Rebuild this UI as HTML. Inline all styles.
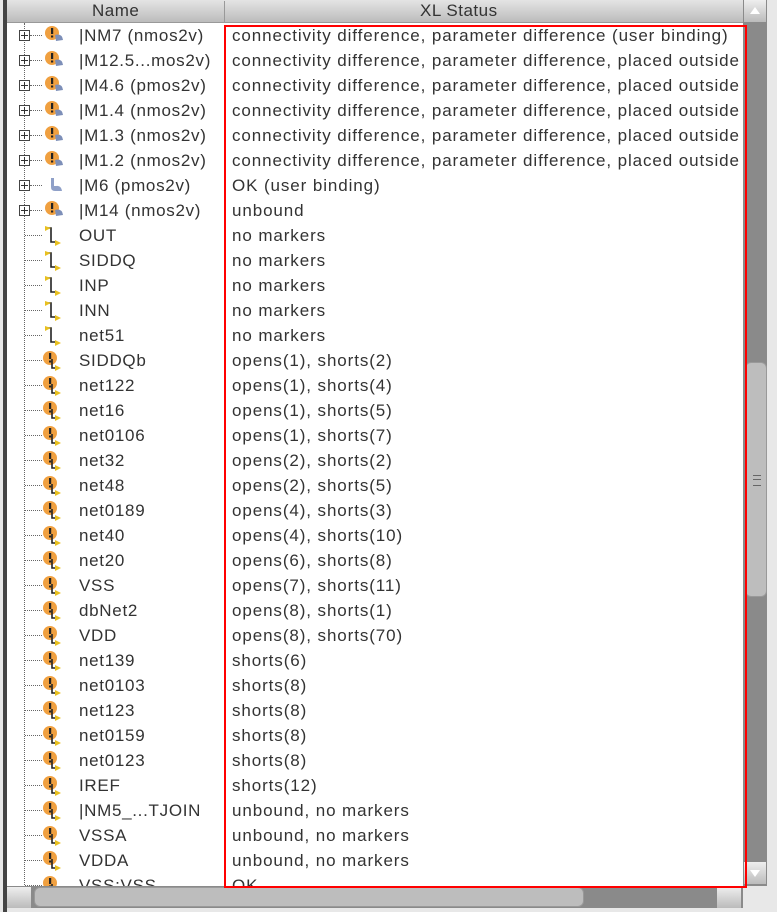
<!DOCTYPE html>
<html><head><style>
body{margin:0;width:777px;height:912px;background:#e8e8e8;font-family:"Liberation Sans",sans-serif;overflow:hidden;position:relative}
.list{position:absolute;left:7px;top:0;width:736px;height:886px;background:#fff}
.lb{position:absolute;left:3px;top:0;width:4px;height:912px;background:#444}
.hdr{position:absolute;top:0;height:22px;background:linear-gradient(#e4e4e4,#bcbcbc);border-bottom:1px solid #999}
.hdr div{position:absolute;top:1px;font-size:17px;color:#333;letter-spacing:0.5px}
.hsep{position:absolute;top:0;width:1px;height:22px;background:#999}
.row{position:absolute;left:0;height:25px;width:743px;font-size:17px;letter-spacing:0.9px;color:#333;line-height:25px}
.n{position:absolute;left:79px;letter-spacing:0.7px}.s{position:absolute;left:232px;white-space:nowrap}
.vl{position:absolute;left:24px;top:23px;width:0;height:870px;border-left:1px dotted #666}
.hc{position:absolute;top:12px;border-top:1px dotted #666}
.pb{position:absolute;left:19px;top:7px;width:9px;height:9px;border:1px solid #444;background:#fff}
.pb:before{content:"";position:absolute;left:1px;top:4px;width:7px;height:1px;background:#333}
.pb:after{content:"";position:absolute;left:4px;top:1px;width:1px;height:7px;background:#333}
.red{position:absolute;left:224px;top:25px;width:519px;height:859px;border:2px solid #f00;z-index:5}
.vs{position:absolute;left:743px;top:0;width:24px;height:886px;background:#8a8a8a}
.hs{position:absolute;left:7px;top:886px;width:736px;height:22px;background:#8a8a8a}
#rows{position:absolute;left:0;top:0;width:743px;height:886px;overflow:hidden}
</style></head><body>
<div class="list"></div>
<div class="lb"></div>
<div class="vl"></div>
<div id="rows"></div>
<div class="hdr" style="left:7px;width:736px"><div style="left:85px">Name</div><div style="left:413px">XL Status</div><div class="hsep" style="left:217px"></div></div>
<svg width="0" height="0" style="position:absolute">
<defs>
<g id="dev"><circle cx="8" cy="8" r="7" fill="#f0a040"/><rect x="7" y="3" width="2.2" height="6" fill="#222"/><rect x="7" y="10.5" width="2.2" height="2" fill="#222"/><path d="M11 10 q7 -2 8 5 l-7 1z" fill="#7d8fb8"/></g>
<g id="ok"><path d="M7 3 v9 q0 4 4 4 h7 q-1 -6 -6 -5 l-2 0 v-8z" fill="#8fa0c8"/></g>
<g id="net"><path d="M6 3 h3 v14 h5" stroke="#222" stroke-width="1.6" fill="none"/><path d="M3 1 l6 2 -6 3z M13 15 l6 3 -6 3z" fill="#e8c020"/></g>
<g id="wn"><circle cx="8" cy="8" r="7" fill="#f0a040"/><rect x="7" y="3" width="2.2" height="6" fill="#222"/><rect x="7" y="10.5" width="2.2" height="2" fill="#222"/><path d="M10 9 v9 h4" stroke="#222" stroke-width="1.6" fill="none"/><path d="M13 15 l6 3 -6 3z" fill="#e8c020"/></g>
</defs></svg>
<script>
var R=[["d","|NM7 (nmos2v)","connectivity difference, parameter difference (user binding)"],
["d","|M12.5...mos2v)","connectivity difference, parameter difference, placed outside"],
["d","|M4.6 (pmos2v)","connectivity difference, parameter difference, placed outside"],
["d","|M1.4 (nmos2v)","connectivity difference, parameter difference, placed outside"],
["d","|M1.3 (nmos2v)","connectivity difference, parameter difference, placed outside"],
["d","|M1.2 (nmos2v)","connectivity difference, parameter difference, placed outside"],
["o","|M6 (pmos2v)","OK (user binding)"],
["d","|M14 (nmos2v)","unbound"],
["n","OUT","no markers"],["n","SIDDQ","no markers"],["n","INP","no markers"],["n","INN","no markers"],["n","net51","no markers"],
["w","SIDDQb","opens(1), shorts(2)"],["w","net122","opens(1), shorts(4)"],["w","net16","opens(1), shorts(5)"],["w","net0106","opens(1), shorts(7)"],["w","net32","opens(2), shorts(2)"],["w","net48","opens(2), shorts(5)"],["w","net0189","opens(4), shorts(3)"],["w","net40","opens(4), shorts(10)"],["w","net20","opens(6), shorts(8)"],["w","VSS","opens(7), shorts(11)"],["w","dbNet2","opens(8), shorts(1)"],["w","VDD","opens(8), shorts(70)"],["w","net139","shorts(6)"],["w","net0103","shorts(8)"],["w","net123","shorts(8)"],["w","net0159","shorts(8)"],["w","net0123","shorts(8)"],["w","IREF","shorts(12)"],["w","|NM5_...TJOIN","unbound, no markers"],["w","VSSA","unbound, no markers"],["w","VDDA","unbound, no markers"],["w","VSS:VSS","OK"]];
var h="";
R.forEach(function(r,i){var t=23+i*25;var ic={d:"dev",o:"ok",n:"net",w:"wn"}[r[0]];var dev=r[0]=="d"||r[0]=="o";
h+='<div class="row" style="top:'+t+'px">'+(dev?'<div class="pb"></div><div class="hc" style="left:30px;width:12px"></div>':'<div class="hc" style="left:25px;width:17px"></div>')+
'<svg style="position:absolute;left:'+(dev?44:42)+'px;top:2px" width="22" height="22"><use href="#'+ic+'"/></svg><span class="n">'+r[1]+'</span><span class="s">'+r[2]+'</span></div>';});
document.getElementById("rows").innerHTML=h;
</script>
<div class="red"></div>
<div class="vs"><div style="position:absolute;left:1px;top:0;width:22px;height:22px;background:linear-gradient(#eee,#bbb)"><div style="position:absolute;left:6px;top:7px;border:5px solid transparent;border-bottom:7px solid #fff;border-top:0"></div></div>
<div style="position:absolute;left:2px;top:362px;width:20px;height:233px;background:#bdbdbd;border-radius:6px;border:1px solid #999"><div style="position:absolute;left:7px;top:112px;width:8px;height:9px;border-top:1px solid #666;border-bottom:1px solid #666;background:linear-gradient(#bdbdbd 3px,#666 3px,#666 4px,#bdbdbd 4px)"></div></div>
<div style="position:absolute;left:1px;top:862px;width:22px;height:22px;background:linear-gradient(#eee,#bbb)"><div style="position:absolute;left:6px;top:8px;border:5px solid transparent;border-top:7px solid #fff;border-bottom:0"></div></div></div>
<div class="hs"><div style="position:absolute;left:0;top:1px;width:24px;height:21px;background:linear-gradient(#eee,#bbb)"></div>
<div style="position:absolute;left:27px;top:1px;width:548px;height:18px;background:#bdbdbd;border-radius:6px;border:1px solid #999"></div>
<div style="position:absolute;left:710px;top:1px;width:24px;height:21px;background:linear-gradient(#eee,#bbb)"></div></div>
</body></html>
